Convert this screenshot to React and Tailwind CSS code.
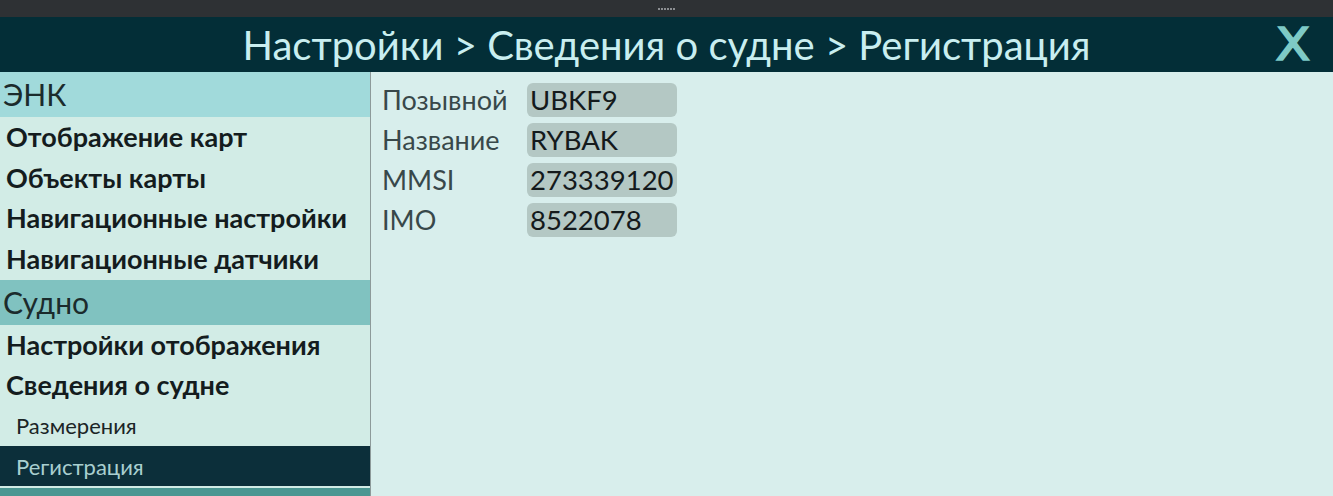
import React from "react";

const font = { fontFamily: "Lato, 'Noto Sans', sans-serif" };

function Header({ children, bg }) {
  return (
    <div className={`h-[45px] shrink-0 flex items-center pl-[3px] text-[30px] text-[#1b2b2c] ${bg}`}>{children}</div>
  );
}

function Item({ children, tall }) {
  return (
    <div
      className={`${tall ? "h-[41px]" : "h-[40px]"} shrink-0 flex items-center pl-[6px] text-[27px] font-bold text-[#141c1e]`}
    >
      {children}
    </div>
  );
}

function Sub({ children, active, tall }) {
  return (
    <div
      className={`${tall ? "h-[41px]" : "h-[40px]"} shrink-0 flex items-center pl-[16px] text-[22px] ${
        active ? "bg-[#0c2f3a] text-[#a9cfd0]" : "text-[#1b2526]"
      }`}
    >
      {children}
    </div>
  );
}

const rows = [
  ["Позывной", "UBKF9"],
  ["Название", "RYBAK"],
  ["MMSI", "273339120"],
  ["IMO", "8522078"],
];

export default function App() {
  return (
    <div style={font} className="w-[1333px] h-[496px] overflow-hidden flex flex-col bg-[#d8eeec]">
      <div className="h-[17px] shrink-0 bg-[#2e3134] flex items-center justify-center">
        <div className="flex gap-[1px]">
          {[0, 1, 2, 3, 4, 5].map((i) => (
            <div key={i} className="w-[2px] h-[2px] bg-[#8c8f92]" />
          ))}
        </div>
      </div>
      <div className="h-[55px] shrink-0 bg-[#032e37] relative flex items-center justify-center">
        <div className="text-[40px] text-[#c9eef0] leading-none">Настройки &gt; Сведения о судне &gt; Регистрация</div>
        <div
          style={{ fontFamily: "'DejaVu Sans', sans-serif" }}
          className="absolute right-[23px] top-[6px] text-[44px] font-normal text-[#7ecac6] leading-none scale-x-[1.15] origin-right [-webkit-text-stroke:1.6px_#7ecac6]"
        >
          X
        </div>
      </div>
      <div className="flex flex-1 min-h-0">
        <div className="w-[371px] shrink-0 bg-[#d2ece6] border-r border-[#8d9a9a] flex flex-col">
          <Header bg="bg-[#a1dadb]">ЭНК</Header>
          <Item tall>Отображение карт</Item>
          <Item>Объекты карты</Item>
          <Item tall>Навигационные настройки</Item>
          <Item tall>Навигационные датчики</Item>
          <Header bg="bg-[#80c2c0]">Судно</Header>
          <Item>Настройки отображения</Item>
          <Item>Сведения о судне</Item>
          <Sub tall>Размерения</Sub>
          <Sub active>Регистрация</Sub>
          <div className="mt-[2px] h-[40px] shrink-0 bg-[#4b9792]" />
        </div>
        <div className="flex-1 pl-[11px] pt-[11px] flex flex-col gap-[6px]">
          {rows.map(([k, v]) => (
            <div key={k} className="flex items-center h-[34px]">
              <div className="w-[145px] text-[27px] text-[#38484a]">{k}</div>
              <div className="w-[150px] h-[34px] rounded-[6px] bg-[#b4c8c4] flex items-center pl-[3px] text-[27.5px] text-[#141a1c]">
                {v}
              </div>
            </div>
          ))}
        </div>
      </div>
    </div>
  );
}
